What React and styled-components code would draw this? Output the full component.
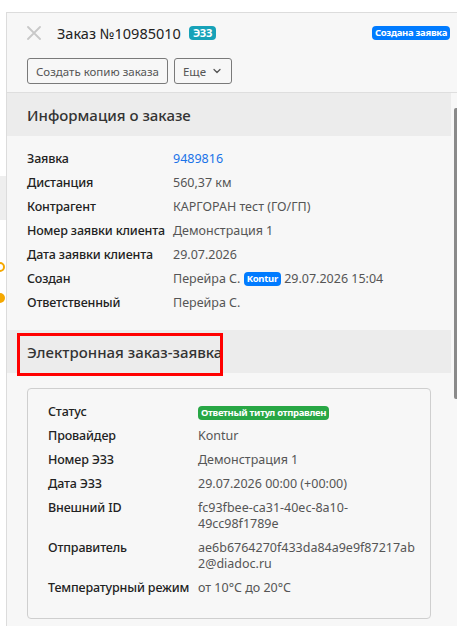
import React from 'react';
import styled, { createGlobalStyle } from 'styled-components';
import { ChevronDown } from 'lucide-react';

const GlobalStyle = createGlobalStyle`
    html, body {
        margin: 0;
        padding: 0;
        background: #fff;
        height: 100%;
        overflow: hidden;
    }
    body {
        font-family: "Noto Sans", "Open Sans", Arial, sans-serif;
        color: #333;
    }
`;

const orderInfo = [
    { label: 'Заявка', value: '9489816', link: true },
    { label: 'Дистанция', value: '560,37 км' },
    { label: 'Контрагент', value: 'КАРГОРАН тест (ГО/ГП)' },
    { label: 'Номер заявки клиента', value: 'Демонстрация 1' },
    { label: 'Дата заявки клиента', value: '29.07.2026' },
    { label: 'Создан', value: 'created' },
    { label: 'Ответственный', value: 'Перейра С.' },
];

const eoInfo = [
    { label: 'Провайдер', value: 'Kontur' },
    { label: 'Номер ЭЗЗ', value: 'Демонстрация 1' },
    { label: 'Дата ЭЗЗ', value: '29.07.2026 00:00 (+00:00)' },
    { label: 'Внешний ID', value: 'fc93fbee-ca31-40ec-8a10-49cc98f1789e' },
    { label: 'Отправитель', value: 'ae6b6764270f433da84a9e9f87217ab2@diadoc.ru' },
    { label: 'Температурный режим', value: 'от 10°C до 20°C' },
];

const App = () => {
    return (
        <>
            <GlobalStyle />
            <Screen>
                <PageEdge>
                    <EdgeBand />
                    <EdgeDot $ring />
                    <EdgeDot />
                </PageEdge>
                <Drawer>
                    <Header>
                        <TitleRow>
                            <CloseButton aria-label="close">
                                <svg width="14" height="14" viewBox="0 0 14 14">
                                    <path d="M1 1L13 13M13 1L1 13" stroke="#c8c8c8" strokeWidth="1.8" strokeLinecap="round" />
                                </svg>
                            </CloseButton>
                            <Title>Заказ №10985010</Title>
                            <Badge $color="#17a2b8" $size="11px" $pad="0 4px">ЭЗЗ</Badge>
                            <Spacer />
                            <Badge $color="#007bff">Создана заявка</Badge>
                        </TitleRow>
                        <Actions>
                            <OutlineButton>Создать копию заказа</OutlineButton>
                            <OutlineButton>
                                Еще
                                <ChevronDown size={12} strokeWidth={2.5} />
                            </OutlineButton>
                        </Actions>
                    </Header>
                    <Body>
                        <Content>
                            <SectionTitle>Информация о заказе</SectionTitle>
                            <InfoGrid $labelWidth="146px" $padding="15px 20px 19px">
                                {orderInfo.map((row) => (
                                    <React.Fragment key={row.label}>
                                        <Label>{row.label}</Label>
                                        {row.value === 'created' ? (
                                            <Value>
                                                Перейра С. <Badge $color="#007bff" $inline>Kontur</Badge> 29.07.2026 15:04
                                            </Value>
                                        ) : (
                                            <Value $link={row.link}>{row.value}</Value>
                                        )}
                                    </React.Fragment>
                                ))}
                            </InfoGrid>
                            <SectionTitle>
                                Электронная заказ-заявка
                                <Highlight />
                            </SectionTitle>
                            <CardWrap>
                                <Card>
                                    <InfoGrid $labelWidth="150px" $padding="0">
                                        <Label>Статус</Label>
                                        <Value>
                                            <Badge $color="#28a745">Ответный титул отправлен</Badge>
                                        </Value>
                                        {eoInfo.map((row) => (
                                            <React.Fragment key={row.label}>
                                                <Label>{row.label}</Label>
                                                <Value $wrap>{row.value}</Value>
                                            </React.Fragment>
                                        ))}
                                    </InfoGrid>
                                </Card>
                            </CardWrap>
                        </Content>
                        <ScrollTrack>
                            <ScrollThumb />
                        </ScrollTrack>
                    </Body>
                </Drawer>
            </Screen>
        </>
    );
};

const Screen = styled.div`
    display: flex;
    height: 626px;
    padding-top: 12px;
    box-sizing: border-box;
`;

const PageEdge = styled.div`
    width: 6px;
    flex-shrink: 0;
    display: flex;
    flex-direction: column;
    align-items: flex-start;
`;

const EdgeBand = styled.div`
    margin-top: 164px;
    width: 6px;
    height: 44px;
    background: #eeeeee;
`;

const EdgeDot = styled.div`
    width: 10px;
    height: 10px;
    margin-left: -5px;
    margin-top: ${(p) => (p.$ring ? '42px' : '21px')};
    border-radius: 50%;
    box-sizing: border-box;
    background: ${(p) => (p.$ring ? '#fff' : '#f5a800')};
    border: ${(p) => (p.$ring ? '2px solid #f5a800' : 'none')};
`;

const Drawer = styled.div`
    flex: 1;
    min-width: 0;
    display: flex;
    flex-direction: column;
    background: #f7f7f7;
    border-left: 1px solid #dcdcdc;
    border-top: 1px solid #dcdcdc;
`;

const Header = styled.div`
    padding: 10px 7px 8px 20px;
    border-bottom: 1px solid #dedede;
`;

const TitleRow = styled.div`
    display: flex;
    align-items: center;
    height: 20px;
`;

const CloseButton = styled.button`
    border: none;
    background: none;
    padding: 0;
    margin-right: 16px;
    display: flex;
    cursor: pointer;
`;

const Title = styled.h1`
    margin: 0 8px 0 0;
    font-size: 14.5px;
    font-weight: 400;
    color: #222;
`;

const Spacer = styled.div`
    flex: 1;
`;

const Badge = styled.span`
    display: inline-block;
    background: ${(p) => p.$color};
    color: #fff;
    font-size: ${(p) => p.$size || '9.5px'};
    font-weight: 700;
    line-height: 14px;
    padding: ${(p) => p.$pad || '0 3px'};
    border-radius: 4px;
    white-space: nowrap;
    vertical-align: ${(p) => (p.$inline ? '1px' : 'middle')};
    letter-spacing: -0.3px;
`;

const Actions = styled.div`
    display: flex;
    gap: 6px;
    margin-top: 15px;
`;

const OutlineButton = styled.button`
    display: flex;
    align-items: center;
    gap: 5px;
    height: 26px;
    padding: 0 8px;
    background: #f7f7f7;
    border: 1px solid #7a7a7a;
    border-radius: 3px;
    font-family: inherit;
    font-size: 11.5px;
    color: #555;
    cursor: pointer;
`;

const Body = styled.div`
    flex: 1;
    min-height: 0;
    display: flex;
    overflow: hidden;
`;

const Content = styled.div`
    flex: 1;
    min-width: 0;
`;

const SectionTitle = styled.h2`
    position: relative;
    margin: 0;
    height: 43px;
    display: flex;
    align-items: center;
    padding: 0 20px;
    background: #ececec;
    font-size: 15px;
    font-weight: 500;
    color: #333;
`;

const Highlight = styled.div`
    position: absolute;
    left: 10px;
    top: 3px;
    width: 206px;
    height: 43px;
    box-sizing: border-box;
    border: 3px solid #ff0000;
`;

const InfoGrid = styled.div`
    display: grid;
    grid-template-columns: ${(p) => p.$labelWidth} 1fr;
    row-gap: 8px;
    padding: ${(p) => p.$padding};
    font-size: 12.5px;
    line-height: 16px;
`;

const Label = styled.div`
    color: #222;
    font-weight: 500;
    white-space: nowrap;
    letter-spacing: -0.15px;
`;

const Value = styled.div`
    color: ${(p) => (p.$link ? '#1a73e8' : '#555')};
    overflow-wrap: ${(p) => (p.$wrap ? 'anywhere' : 'normal')};
`;

const CardWrap = styled.div`
    padding: 15px 20px 10px;
`;

const Card = styled.div`
    border: 1px solid #cfcfcf;
    border-radius: 4px;
    padding: 15px 10px 22px 20px;
`;

const ScrollTrack = styled.div`
    width: 6px;
    flex-shrink: 0;
    display: flex;
    justify-content: flex-end;
`;

const ScrollThumb = styled.div`
    width: 3px;
    height: 291px;
    margin-top: 15px;
    background: #8a8a8a;
    border-radius: 2px 0 0 2px;
`;

export default App;
